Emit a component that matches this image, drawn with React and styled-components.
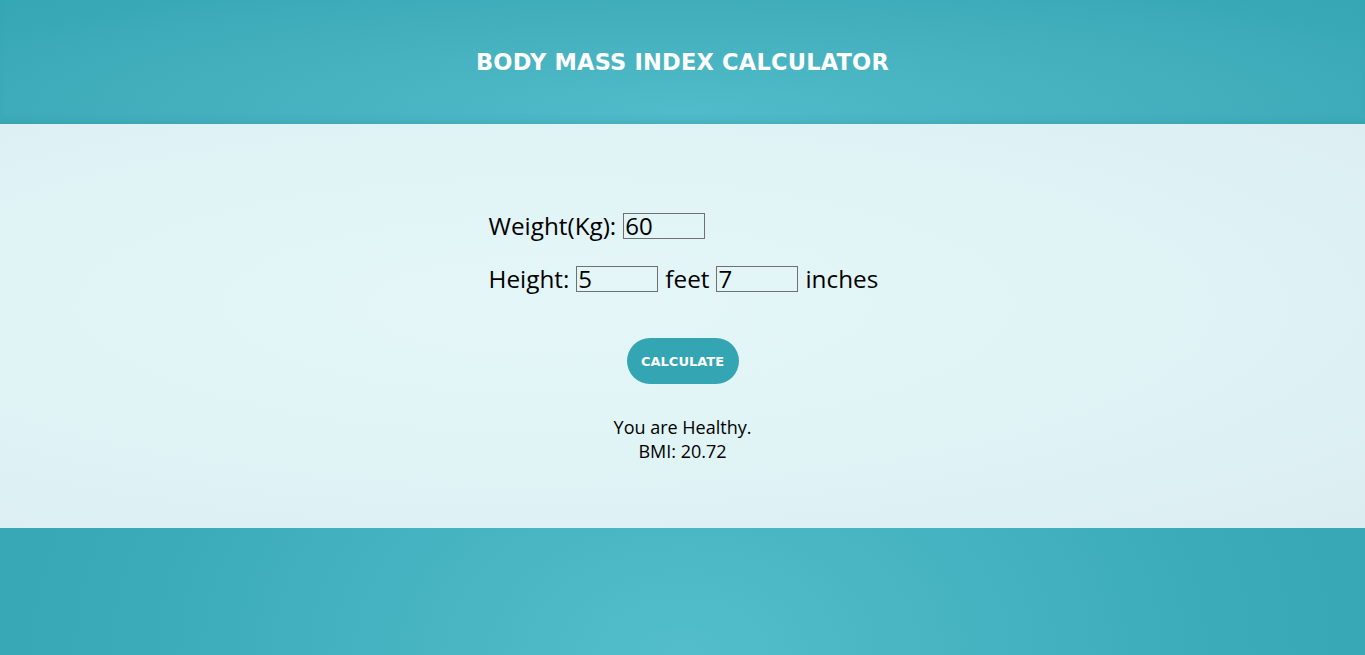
import React, { useState } from 'react';
import styled, { createGlobalStyle } from 'styled-components';

const GlobalStyle = createGlobalStyle`
  html, body {
    margin: 0;
    padding: 0;
  }
  body {
    font-family: 'Open Sans', 'Liberation Sans', sans-serif;
    background: radial-gradient(ellipse 70% 100% at 50% 100%, #53bdcb 0%, #3aaab8 60%, #33a3b1 100%);
    min-height: 655px;
  }
`;

const Page = styled.div`
  display: flex;
  flex-direction: column;
  min-height: 655px;
`;

const Header = styled.header`
  height: 124px;
  display: flex;
  align-items: center;
  justify-content: center;
  background: radial-gradient(ellipse 70% 140% at 50% 90%, #50bbc9 0%, #43afbd 55%, #34a5b3 100%);
  box-shadow: inset 0 -6px 8px -6px rgba(30, 130, 145, 0.35);
`;

const Title = styled.h1`
  margin: 0;
  color: #fff;
  font-family: 'DejaVu Sans', 'Liberation Sans', sans-serif;
  font-weight: 700;
  font-size: 22.5px;
  letter-spacing: 0.2px;
`;

const Main = styled.main`
  height: 404px;
  box-sizing: border-box;
  padding-top: 85px;
  display: flex;
  flex-direction: column;
  align-items: center;
  background: radial-gradient(ellipse at 40% 45%, #e4f6f8 0%, #e0f3f5 50%, #dbedf0 100%);
`;

const Form = styled.form`
  width: 388px;
  display: flex;
  flex-direction: column;
  align-items: center;
`;

const Fields = styled.div`
  display: flex;
  flex-direction: column;
  gap: 20px;
  align-self: flex-start;
`;

const Row = styled.div`
  display: flex;
  align-items: center;
  gap: 7px;
  font-size: 24.3px;
  color: #000;
  line-height: 33px;
  white-space: nowrap;
`;

const NumberInput = styled.input`
  width: 82px;
  height: 26px;
  box-sizing: border-box;
  border: 1px solid #707070;
  background: transparent;
  font-family: 'Open Sans', 'Liberation Sans', sans-serif;
  font-size: 24px;
  padding: 0 1px;
  color: #000;
  outline: none;
  line-height: 24px;
`;

const Button = styled.button`
  margin-top: 43px;
  width: 112px;
  height: 46px;
  border: none;
  border-radius: 23px;
  background: #34a5b3;
  color: #fff;
  font-family: 'DejaVu Sans', 'Liberation Sans', sans-serif;
  font-weight: 700;
  font-size: 13px;
  cursor: pointer;
`;

const Result = styled.div`
  margin-top: 31px;
  text-align: center;
  font-size: 18px;
  line-height: 24px;
  color: #000;
`;

const App = () => {
  const [weight, setWeight] = useState('60');
  const [feet, setFeet] = useState('5');
  const [inches, setInches] = useState('7');
  const [bmi, setBmi] = useState('20.72');

  const calculate = (e) => {
    e.preventDefault();
    const meters = (Number(feet) * 12 + Number(inches)) * 0.0254;
    setBmi((Number(weight) / (meters * meters)).toFixed(2));
  };

  return (
    <>
      <GlobalStyle />
      <Page>
        <Header>
          <Title>BODY MASS INDEX CALCULATOR</Title>
        </Header>
        <Main>
          <Form onSubmit={calculate}>
            <Fields>
              <Row>
                Weight(Kg):
                <NumberInput value={weight} onChange={(e) => setWeight(e.target.value)} />
              </Row>
              <Row>
                Height:
                <NumberInput value={feet} onChange={(e) => setFeet(e.target.value)} />
                feet
                <NumberInput value={inches} onChange={(e) => setInches(e.target.value)} />
                inches
              </Row>
            </Fields>
            <Button type="submit">CALCULATE</Button>
          </Form>
          <Result>
            You are Healthy.
            <br />
            BMI: {bmi}
          </Result>
        </Main>
      </Page>
    </>
  );
};

export default App;
